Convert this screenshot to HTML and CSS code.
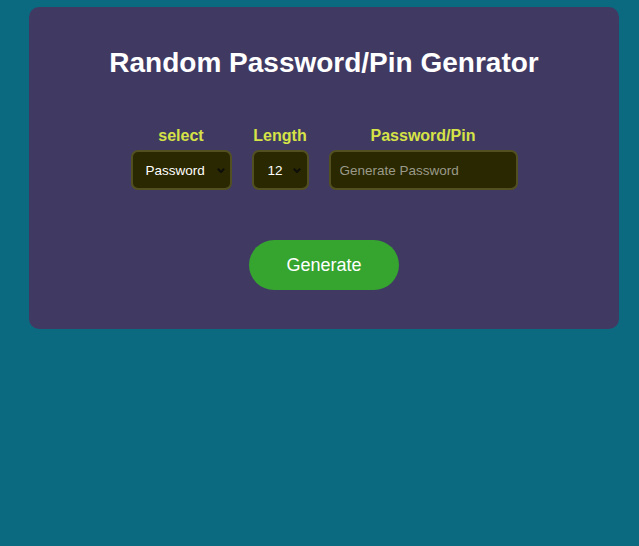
FILE: index.html
```html
<!DOCTYPE html>
<html>
<head>
<meta charset="utf-8">
<link rel="stylesheet" href="styles.css">
</head>
<body>
<div class="card">
  <h1 class="title">Random Password/Pin Genrator</h1>
  <div class="controls">
    <div class="field">
      <label class="label">select</label>
      <div class="sel-wrap">
        <select class="control sel-type">
          <option>Password</option>
          <option>Pin</option>
        </select>
        <svg class="chev" width="8" height="5" viewBox="0 0 8 5"><path d="M0.8 0.8 L4 4 L7.2 0.8" fill="none" stroke="#0e0e0a" stroke-width="2"/></svg>
      </div>
    </div>
    <div class="field">
      <label class="label">Length</label>
      <div class="sel-wrap">
        <select class="control sel-len">
          <option>12</option>
        </select>
        <svg class="chev" width="8" height="5" viewBox="0 0 8 5"><path d="M0.8 0.8 L4 4 L7.2 0.8" fill="none" stroke="#0e0e0a" stroke-width="2"/></svg>
      </div>
    </div>
    <div class="field">
      <label class="label">Password/Pin</label>
      <input class="control out" type="text" placeholder="Generate Password">
    </div>
  </div>
  <button class="gen">Generate</button>
</div>
</body>
</html>
```
FILE: styles.css
```css
html, body { margin: 0; padding: 0; }
body {
  background: #0c6a80;
  font-family: "Liberation Sans", Arial, sans-serif;
  height: 546px;
  padding-top: 7px;
  box-sizing: border-box;
}
.card {
  margin: 0 20px 0 29px;
  height: 322px;
  background: #403a63;
  border-radius: 10px;
  display: flex;
  flex-direction: column;
  align-items: center;
  box-sizing: border-box;
  padding-top: 40px;
}
.title {
  margin: 0;
  color: #fff;
  font-size: 28px;
  font-weight: bold;
  line-height: 32px;
}
.controls {
  display: flex;
  gap: 20px;
  margin-top: 48px;
  align-items: flex-end;
}
.field {
  display: flex;
  flex-direction: column;
  align-items: center;
  gap: 5px;
}
.label {
  color: #d6e346;
  font-weight: bold;
  font-size: 16px;
  line-height: 18px;
}
.sel-wrap {
  position: relative;
  display: flex;
}
.control {
  height: 40px;
  box-sizing: border-box;
  background: #2a2800;
  border: 2px solid #525020;
  border-radius: 7px;
  color: #fff;
  font-family: "Liberation Sans", Arial, sans-serif;
  font-size: 13.5px;
  outline: none;
}
select.control {
  appearance: none;
  -webkit-appearance: none;
}
.chev {
  position: absolute;
  top: 18px;
  pointer-events: none;
}
.sel-type { width: 101px; padding: 0 8px 0 13px; }
.sel-type + .chev { left: 86px; }
.sel-len { width: 57px; padding: 0 6px 0 14px; }
.sel-len + .chev { left: 41px; }
.out { width: 189px; padding: 0 9px; }
.out::placeholder { color: #9a9a8a; }
.gen {
  margin-top: 50px;
  width: 150px;
  height: 50px;
  border: none;
  border-radius: 25px;
  background: #35a52f;
  color: #fff;
  font-family: "Liberation Sans", Arial, sans-serif;
  font-size: 18px;
}
```
